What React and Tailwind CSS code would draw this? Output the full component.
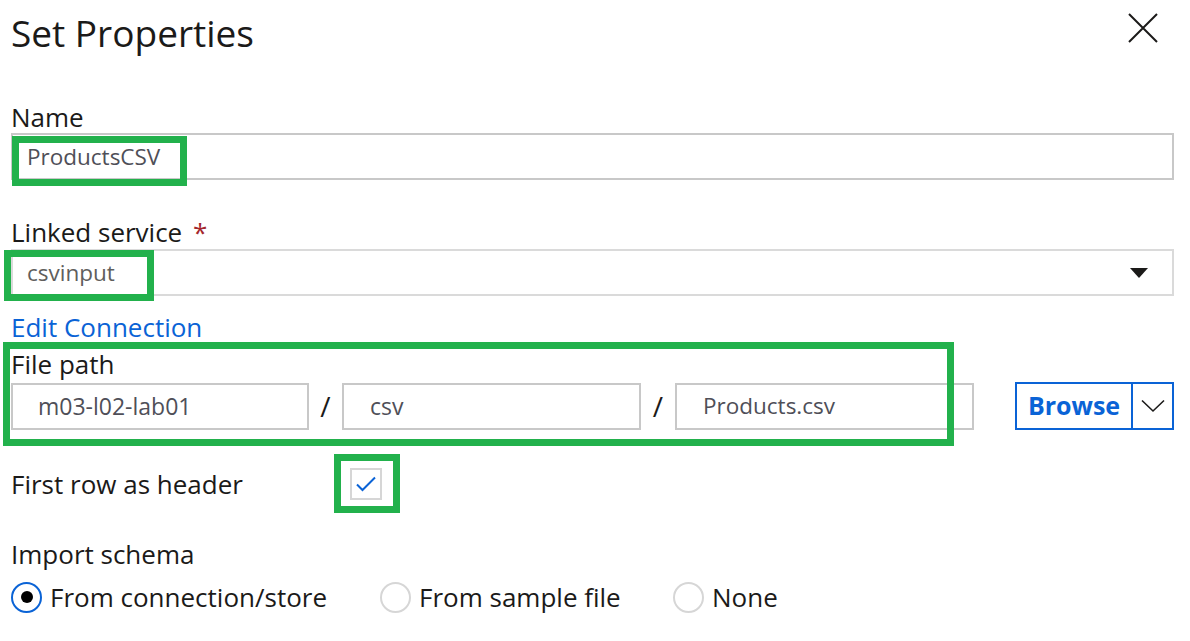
import { useState } from "react";

const FONT = { fontFamily: "'Segoe UI', 'Open Sans', 'Noto Sans', sans-serif" };

function GreenBox({ className }) {
  return <div className={`absolute border-[7px] border-[#22b14c] pointer-events-none ${className}`} />;
}

function Radio({ checked, label }) {
  return (
    <div className="flex items-center gap-[8px]">
      <div
        className={`w-[31px] h-[31px] rounded-full border-2 flex items-center justify-center ${
          checked ? "border-[#0a63d6]" : "border-[#d6d6d6]"
        }`}
      >
        {checked && <div className="w-[12px] h-[12px] rounded-full bg-black" />}
      </div>
      <span className="text-[26px] text-[#1b1a19] leading-[32px]">{label}</span>
    </div>
  );
}

export default function App() {
  const [header, setHeader] = useState(true);

  return (
    <div className="w-[1190px] h-[641px] bg-white overflow-hidden pl-[11px] pr-[16px] relative" style={FONT}>
      {/* Header */}
      <div className="h-[66px] flex items-center justify-between">
        <h1 className="text-[37px] leading-[44px] text-[#1b1a19] font-normal">Set Properties</h1>
        <svg width="30" height="30" viewBox="0 0 30 30" className="mr-[16px] -mt-[10px]">
          <path d="M1 1 L29 29 M29 1 L1 29" stroke="#1b1a19" strokeWidth="2" />
        </svg>
      </div>

      {/* Name */}
      <div className="mt-[35px] text-[26px] leading-[32px] text-[#1b1a19]">Name</div>
      <div className="relative h-[47px] border-2 border-[#c8c8c8] flex items-center pl-[14px] text-[22.5px] text-[#4f4f58]">
        ProductsCSV
        <GreenBox className="left-[-1px] top-[1px] w-[175px] h-[50px]" />
      </div>

      {/* Linked service */}
      <div className="mt-[36px] text-[26px] leading-[32px] text-[#1b1a19]">
        Linked service <span className="text-[#a4262c] ml-[4px]">*</span>
      </div>
      <div className="mt-[1px] relative h-[47px] border-2 border-[#dadada] flex items-center justify-between pl-[14px] pr-[24px] text-[22.5px] text-[#605e5c]">
        <span>csvinput</span>
        <svg width="18" height="10" viewBox="0 0 18 10">
          <path d="M0 0 L18 0 L9 10 Z" fill="#1b1a19" />
        </svg>
        <GreenBox className="left-[-9px] top-[-1px] w-[150px] h-[51px]" />
      </div>

      {/* Edit connection */}
      <div className="mt-[15px] text-[26px] leading-[32px] text-[#0a63d6]">Edit Connection</div>

      {/* File path */}
      <div className="relative">
        <div className="mt-[5px] text-[26px] leading-[32px] text-[#1b1a19]">File path</div>
        <div className="mt-[2px] flex items-center">
          <div className="w-[298px] h-[47px] border-2 border-[#c8c8c8] flex items-center pl-[25px] text-[23px] text-[#4f4f58]">
            m03-l02-lab01
          </div>
          <span className="w-[33px] text-center text-[28px] text-[#1b1a19]">/</span>
          <div className="w-[299px] h-[47px] border-2 border-[#c8c8c8] flex items-center pl-[26px] text-[23px] text-[#4f4f58]">
            csv
          </div>
          <span className="w-[34px] text-center text-[28px] text-[#1b1a19]">/</span>
          <div className="w-[299px] h-[47px] border-2 border-[#c8c8c8] flex items-center pl-[26px] text-[22.5px] text-[#4f4f58]">
            Products.csv
          </div>
          <div className="ml-[41px] h-[48px] w-[159px] border-2 border-[#0a63d6] flex">
            <div className="w-[114px] flex items-center justify-center text-[25px] font-bold text-[#0a63d6]">Browse</div>
            <div className="w-[2px] bg-[#0a63d6]" />
            <div className="flex-1 flex items-center justify-center">
              <svg width="24" height="14" viewBox="0 0 24 14">
                <path d="M1 1.5 L12 12 L23 1.5" fill="none" stroke="#1b1a19" strokeWidth="1.6" />
              </svg>
            </div>
          </div>
        </div>
        <GreenBox className="left-[-8px] top-[-6px] w-[951px] h-[104px]" />
      </div>

      {/* First row as header */}
      <div className="mt-[38px] h-[31px] flex items-center">
        <span className="w-[339px] text-[26px] leading-[32px] text-[#1b1a19]">First row as header</span>
        <div className="relative">
          <button
            onClick={() => setHeader(!header)}
            className="w-[32px] h-[32px] border-2 border-[#d6d6d6] flex items-center justify-center bg-white"
          >
            {header && (
              <svg width="20" height="16" viewBox="0 0 20 16">
                <path d="M1 8.5 L6.5 14 L19 1.5" fill="none" stroke="#0a63d6" strokeWidth="2" />
              </svg>
            )}
          </button>
          <GreenBox className="left-[-16px] top-[-14px] w-[66px] h-[59px]" />
        </div>
      </div>

      {/* Import schema */}
      <div className="mt-[39px] text-[26px] leading-[32px] text-[#1b1a19]">Import schema</div>
      <div className="mt-[11px] flex items-center">
        <div className="w-[369px]">
          <Radio checked label="From connection/store" />
        </div>
        <div className="w-[293px]">
          <Radio label="From sample file" />
        </div>
        <Radio label="None" />
      </div>
    </div>
  );
}
